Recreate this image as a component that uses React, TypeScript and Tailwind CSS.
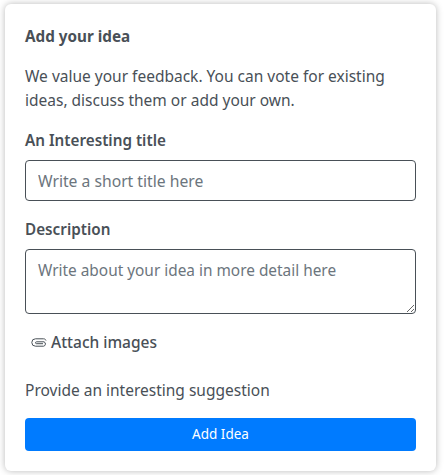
const fieldClass =
  'w-full rounded-[4px] border border-[#495057] bg-white px-3 text-[#495057] outline-none placeholder:text-[#6c757d]';

function ClipIcon() {
  return (
    <svg viewBox="0 0 16 9" className="h-[9px] w-4 shrink-0" fill="none" stroke="currentColor" strokeWidth="1">
      <path d="M15 2.500C14.500 1.200 13.500 .8 12.500 .8H4.500a3.700 3.700 0 0 0 0 7.400H12.500a2.300 2.300 0 0 0 .5-4.400H5.500a.8.8 0 0 0 0 1.900H12" />
    </svg>
  );
}

export default function App() {
  return (
    <main className="h-[475px] w-[444px] overflow-hidden bg-white pl-[5px] pr-2 pt-1 font-['Noto_Sans',sans-serif] text-[15.5px] text-[#495057]">
      <section className="flex h-[467px] flex-col rounded-[6px] bg-white px-5 shadow-[0_0_7px_rgba(0,0,0,0.28)]">
        <h2 className="mt-[22px] text-[15.25px] leading-5 font-bold">Add your idea</h2>
        <p className="mt-[18px] leading-6">
          We value your feedback. You can vote for existing ideas, discuss them or add your own.
        </p>
        <label className="mt-[16px] text-[15.25px] leading-6 font-semibold">An Interesting title</label>
        <input className={`${fieldClass} mt-2 h-[41px] text-[15.7px]`} placeholder="Write a short title here" />
        <label className="mt-4 text-[15.25px] leading-6 font-semibold">Description</label>
        <textarea
          className={`${fieldClass} mt-2 block h-[65px] py-[9px] text-[15.4px]`}
          placeholder="Write about your idea in more detail here"
        />
        <button className="mt-4 flex items-center gap-1 pl-[6px] text-[15.5px] leading-6 font-medium">
          <ClipIcon />
          Attach images
        </button>
        <p className="mt-[24px] leading-6">Provide an interesting suggestion</p>
        <button className="mt-[16px] h-[33px] w-full rounded-[4px] bg-[#007bff] text-[13.5px] text-white">Add Idea</button>
      </section>
    </main>
  );
}
